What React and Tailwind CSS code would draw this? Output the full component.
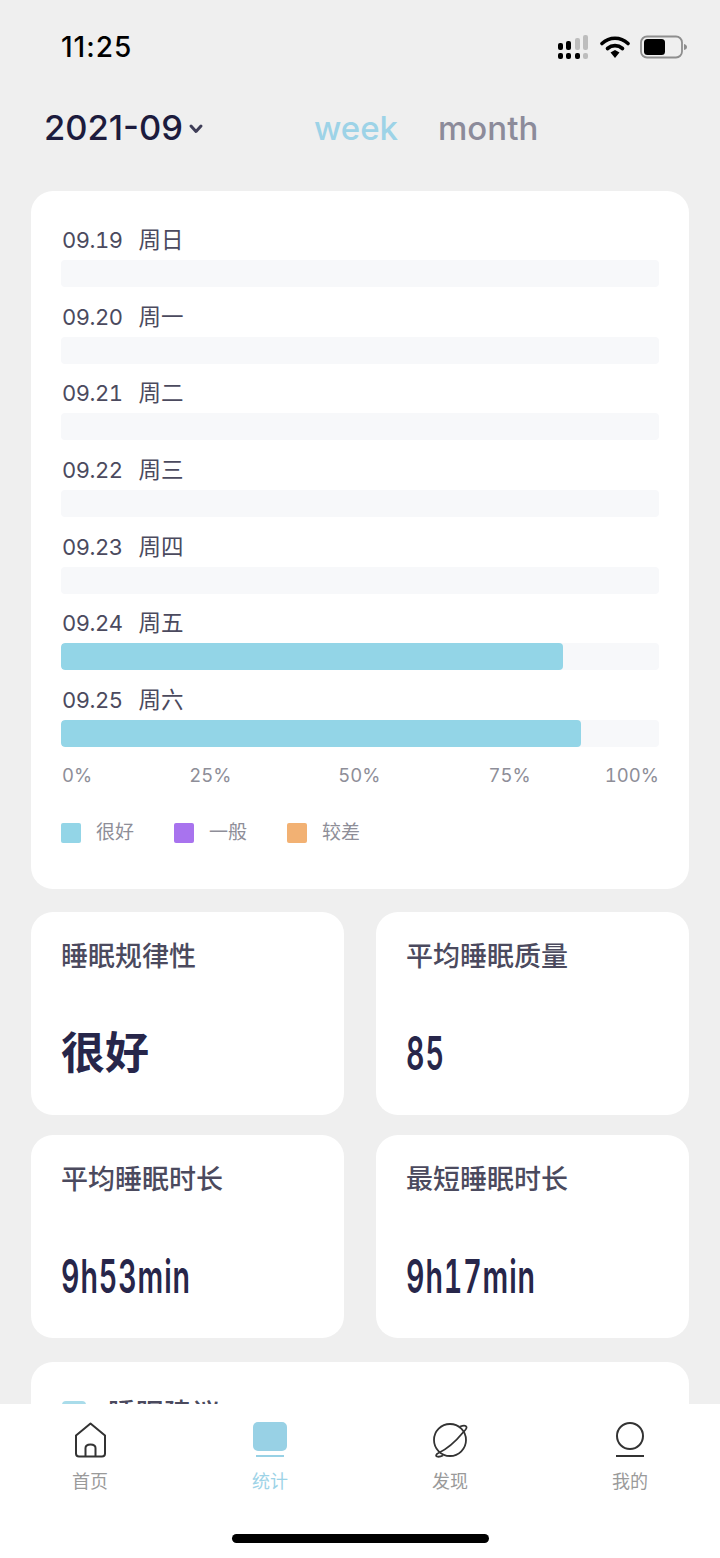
import React from 'react';

const days = [
  { date: '09.19', week: '周日', value: 0 },
  { date: '09.20', week: '周一', value: 0 },
  { date: '09.21', week: '周二', value: 0 },
  { date: '09.22', week: '周三', value: 0 },
  { date: '09.23', week: '周四', value: 0 },
  { date: '09.24', week: '周五', value: 84 },
  { date: '09.25', week: '周六', value: 87 },
];

const axis = [
  { label: '0%', className: '' },
  { label: '25%', className: 'ml-[97px]' },
  { label: '50%', className: 'ml-[107px]' },
  { label: '75%', className: 'ml-[108px]' },
  { label: '100%', className: 'ml-auto' },
];

const legend = [
  { label: '很好', color: 'bg-[#93d5e7]' },
  { label: '一般', color: 'bg-[#a873ee]' },
  { label: '较差', color: 'bg-[#f2b173]' },
];

const stats = [
  { title: '睡眠规律性', value: '很好', cjk: true },
  { title: '平均睡眠质量', value: '85' },
  { title: '平均睡眠时长', value: '9h53min' },
  { title: '最短睡眠时长', value: '9h17min' },
];

const StatusBar = () => (
  <div className="flex h-[92px] items-center justify-between pl-[61px] pr-[33px] pt-[2px]">
    <span className="text-[28px] font-medium leading-none tracking-[1px] text-black">11:25</span>
    <div className="flex items-center gap-[10px]">
      <svg width="33" height="24" viewBox="0 0 33 24">
        <rect x="1" y="8" width="5" height="7" rx="2" fill="#000" />
        <rect x="9" y="6" width="5" height="9" rx="2" fill="#000" />
        <rect x="18" y="3" width="5" height="12" rx="2" fill="#bdbdbd" />
        <rect x="26" y="0" width="5" height="15" rx="2" fill="#bdbdbd" />
        <rect x="1" y="18" width="5" height="6" rx="2" fill="#000" />
        <rect x="9" y="18" width="5" height="6" rx="2" fill="#000" />
        <rect x="18" y="18" width="5" height="6" rx="2" fill="#000" />
        <rect x="26" y="18" width="5" height="6" rx="2" fill="#bdbdbd" />
      </svg>
      <svg width="30" height="24" viewBox="0 0 30 24" fill="none">
        <path d="M2 8.5C9.5 1.5 20.5 1.5 28 8.5" stroke="#000" strokeWidth="3.6" strokeLinecap="round" />
        <path d="M7.5 13.5C12 9.7 18 9.7 22.5 13.5" stroke="#000" strokeWidth="3.6" strokeLinecap="round" />
        <path d="M10.5 17.5L15 15L19.5 17.5L15 23Z" fill="#000" />
      </svg>
      <svg width="47" height="24" viewBox="0 0 47 24" fill="none">
        <rect x="1" y="1.5" width="41" height="21" rx="6" stroke="#8e8e8e" strokeWidth="1.8" />
        <rect x="4" y="4" width="21" height="16" rx="3.5" fill="#000" />
        <path d="M44 9C46 9.5 47 10.5 47 12C47 13.5 46 14.5 44 15Z" fill="#8e8e8e" />
      </svg>
    </div>
  </div>
);

const Header = () => (
  <div className="flex h-[99px] items-start pl-[44px] pt-[14px]">
    <div className="flex w-[270px] items-center">
      <span className="text-[34.5px] font-medium leading-[44px] text-[#1c1b3d]">2021-09</span>
      <svg className="ml-[5px] mt-[1px]" width="16" height="12" viewBox="0 0 16 12" fill="none">
        <path d="M3 3L8 8.5L13 3" stroke="#3f3e58" strokeWidth="3" strokeLinecap="round" strokeLinejoin="round" />
      </svg>
    </div>
    <div className="flex items-center gap-[40px] text-[33px] font-medium leading-[44px]">
      <span className="text-[#9dd3e7]">week</span>
      <span className="text-[#8c8b9a]">month</span>
    </div>
  </div>
);

const Chart = () => (
  <div className="rounded-[22px] bg-white px-[30px] pb-[46px] pt-[36px]">
    <div className="flex flex-col gap-[16.67px]">
      {days.map((d) => (
        <div key={d.date}>
          <div className="mb-[7px] flex h-[26px] items-center gap-[16px] pl-[1px] text-[22px] leading-[26px] text-[#4b4a5e]">
            <span className="tracking-[-0.5px] tabular-nums">{d.date}</span>
            <span className="text-[22.5px]">{d.week}</span>
          </div>
          <div className="h-[27px] overflow-hidden rounded-[4px] bg-[#f7f8fa]">
            {d.value > 0 && (
              <div className="h-full rounded-[4px] bg-[#93d5e7]" style={{ width: `${d.value}%` }} />
            )}
          </div>
        </div>
      ))}
    </div>
    <div className="mt-[18px] flex h-[20px] items-center pl-[1px] text-[18.5px] leading-[20px] tabular-nums text-[#8e8e98]">
      {axis.map((a) => (
        <span key={a.label} className={a.className}>{a.label}</span>
      ))}
    </div>
    <div className="mt-[38px] flex h-[20px]">
      {legend.map((l) => (
        <div key={l.label} className="flex w-[113px] items-center gap-[15px]">
          <span className={`h-[20px] w-[20px] rounded-[2px] ${l.color}`} />
          <span className="text-[19px] leading-[22px] text-[#8e8e98]">{l.label}</span>
        </div>
      ))}
    </div>
  </div>
);

const StatCard = ({ title, value, cjk }) => (
  <div className="flex h-[203px] flex-col rounded-[22px] bg-white pl-[30px] pt-[28px]">
    <div className="text-[27px] font-medium leading-[34px] text-[#4b4a5e]">{title}</div>
    {cjk ? (
      <div className="mt-[51px] text-[44px] font-bold leading-[56px] text-[#27264a]">{value}</div>
    ) : (
      <div className="mt-[51px] origin-left scale-x-[0.62] text-[46px] font-semibold leading-[56px] tracking-[1.5px] tabular-nums text-[#27264a]">{value}</div>
    )}
  </div>
);

const HomeIcon = () => (
  <svg width="34" height="36" viewBox="0 0 34 36" fill="none" stroke="#333" strokeWidth="2" strokeLinejoin="round">
    <path d="M17.5 1.5L32 13.5V31.5C32 33.5 31 34.5 29 34.5H6C4 34.5 3 33.5 3 31.5V13.5Z" />
    <path d="M12.5 34.5V26C12.5 23.5 14.5 22.5 17.5 22.5C20.5 22.5 22.5 23.5 22.5 26V34.5" />
  </svg>
);

const StatIcon = () => (
  <svg width="34" height="36" viewBox="0 0 34 36">
    <rect x="0" y="0" width="34" height="29" rx="5" fill="#98d1e5" />
    <rect x="3" y="33" width="28" height="2" fill="#98d1e5" />
  </svg>
);

const PlanetIcon = () => (
  <svg width="36" height="36" viewBox="0 0 36 36" fill="none" stroke="#333" strokeWidth="1.8">
    <circle cx="18" cy="18" r="16" />
    <path d="M28 4.5C31 3.5 34 3.5 34.5 5C35 6.5 33 8.5 31 10.5C24 19 15 27 6.5 31C4 32 3.5 34 5 34.5C6.5 35 9 34.5 11 33.5" />
  </svg>
);

const MineIcon = () => (
  <svg width="28" height="36" viewBox="0 0 28 36" fill="none" stroke="#333" strokeWidth="2">
    <circle cx="14" cy="14" r="13" />
    <path d="M0 34H28" />
  </svg>
);

const tabs = [
  { label: '首页', icon: <HomeIcon /> },
  { label: '统计', icon: <StatIcon />, active: true },
  { label: '发现', icon: <PlanetIcon /> },
  { label: '我的', icon: <MineIcon /> },
];

const TabBar = () => (
  <div className="absolute bottom-0 left-0 h-[154px] w-full bg-white">
    <div className="grid grid-cols-4 pt-[18px]">
      {tabs.map((t) => (
        <div key={t.label} className="flex flex-col items-center">
          <div className="flex h-[36px] items-center justify-center">{t.icon}</div>
          <div className={`mt-[13px] text-[18px] leading-[22px] ${t.active ? 'text-[#9dd3e7]' : 'text-[#9a9a9a]'}`}>
            {t.label}
          </div>
        </div>
      ))}
    </div>
    <div className="absolute bottom-[15px] left-[232px] h-[9px] w-[257px] rounded-full bg-black" />
  </div>
);

const App = () => (
  <div
    className="relative h-[1558px] w-[720px] overflow-hidden bg-[#efefef]"
    style={{ fontFamily: 'Inter, "Noto Sans CJK SC", sans-serif' }}
  >
    <StatusBar />
    <Header />
    <div className="px-[31px]">
      <Chart />
      <div className="mt-[23px] grid grid-cols-2 gap-x-[32px] gap-y-[20px]">
        {stats.map((s) => (
          <StatCard key={s.title} {...s} />
        ))}
      </div>
      <div className="mt-[24px] h-[200px] rounded-[22px] bg-white pl-[31px] pt-[35px]">
        <div className="flex items-start gap-[22px]">
          <div className="mt-[4px] h-[26px] w-[24px] rounded-[4px] bg-[#a9dcea]" />
          <span className="text-[28px] font-medium leading-[34px] text-[#4b4a5e]">睡眠建议</span>
        </div>
      </div>
    </div>
    <TabBar />
  </div>
);

export default App;
